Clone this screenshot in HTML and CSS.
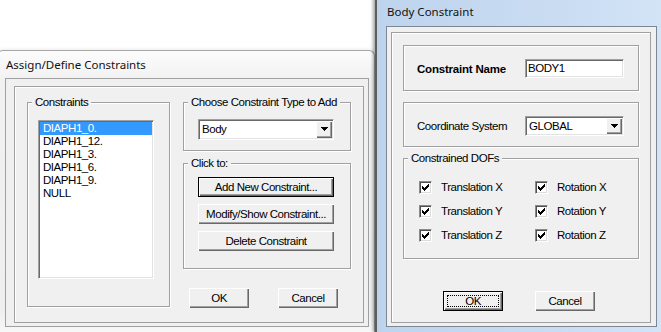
FILE: index.html
```html
<!DOCTYPE html>
<html>
<head>
<meta charset="utf-8">
<link rel="stylesheet" href="styles.css">
</head>
<body>
<div class="win win-left">
  <div class="title">Assign/Define Constraints</div>
  <div class="client">
    <div class="frame">
      <div class="group g-list">
        <span class="legend">Constraints</span>
        <div class="listbox">
          <div class="item sel">DIAPH1_0.</div>
          <div class="item">DIAPH1_12.</div>
          <div class="item">DIAPH1_3.</div>
          <div class="item">DIAPH1_6.</div>
          <div class="item">DIAPH1_9.</div>
          <div class="item">NULL</div>
        </div>
      </div>
      <div class="col">
        <div class="group g-type">
          <span class="legend">Choose Constraint Type to Add</span>
          <div class="combo combo-type">
            <span class="val">Body</span>
            <span class="drop"><svg width="7" height="4" viewBox="0 0 7 4" shape-rendering="crispEdges"><path d="M0 0h7v1h-7z M1 1h5v1h-5z M2 2h3v1h-3z M3 3h1v1h-1z" fill="#000"/></svg></span>
          </div>
        </div>
        <div class="group g-click">
          <span class="legend">Click to:</span>
          <button class="btn def">Add New Constraint...</button>
          <button class="btn">Modify/Show Constraint...</button>
          <button class="btn">Delete Constraint</button>
        </div>
        <div class="actions">
          <button class="btn">OK</button>
          <button class="btn">Cancel</button>
        </div>
      </div>
    </div>
  </div>
</div>

<div class="win win-right">
  <div class="title">Body Constraint</div>
  <div class="client">
    <div class="panel">
      <div class="box box-name">
        <span class="lbl bold">Constraint Name</span>
        <div class="textbox">BODY1</div>
      </div>
      <div class="box box-coord">
        <span class="lbl">Coordinate System</span>
        <div class="combo combo-coord">
          <span class="val">GLOBAL</span>
          <span class="drop"><svg width="7" height="4" viewBox="0 0 7 4" shape-rendering="crispEdges"><path d="M0 0h7v1h-7z M1 1h5v1h-5z M2 2h3v1h-3z M3 3h1v1h-1z" fill="#000"/></svg></span>
        </div>
      </div>
      <div class="group g-dofs">
        <span class="legend">Constrained DOFs</span>
        <div class="chk"><span class="cb"><svg width="11" height="11" viewBox="1 1 11 11" shape-rendering="crispEdges"><path d="M9 3h1v1h-1z M8 4h2v1h-2z M3 5h1v1h-1z M7 5h3v1h-3z M3 6h2v1h-2z M6 6h3v1h-3z M3 7h5v1h-5z M4 8h3v1h-3z M5 9h1v1h-1z" fill="#000"/></svg></span><span>Translation X</span></div>
        <div class="chk"><span class="cb"><svg width="11" height="11" viewBox="1 1 11 11" shape-rendering="crispEdges"><path d="M9 3h1v1h-1z M8 4h2v1h-2z M3 5h1v1h-1z M7 5h3v1h-3z M3 6h2v1h-2z M6 6h3v1h-3z M3 7h5v1h-5z M4 8h3v1h-3z M5 9h1v1h-1z" fill="#000"/></svg></span><span>Rotation X</span></div>
        <div class="chk"><span class="cb"><svg width="11" height="11" viewBox="1 1 11 11" shape-rendering="crispEdges"><path d="M9 3h1v1h-1z M8 4h2v1h-2z M3 5h1v1h-1z M7 5h3v1h-3z M3 6h2v1h-2z M6 6h3v1h-3z M3 7h5v1h-5z M4 8h3v1h-3z M5 9h1v1h-1z" fill="#000"/></svg></span><span>Translation Y</span></div>
        <div class="chk"><span class="cb"><svg width="11" height="11" viewBox="1 1 11 11" shape-rendering="crispEdges"><path d="M9 3h1v1h-1z M8 4h2v1h-2z M3 5h1v1h-1z M7 5h3v1h-3z M3 6h2v1h-2z M6 6h3v1h-3z M3 7h5v1h-5z M4 8h3v1h-3z M5 9h1v1h-1z" fill="#000"/></svg></span><span>Rotation Y</span></div>
        <div class="chk"><span class="cb"><svg width="11" height="11" viewBox="1 1 11 11" shape-rendering="crispEdges"><path d="M9 3h1v1h-1z M8 4h2v1h-2z M3 5h1v1h-1z M7 5h3v1h-3z M3 6h2v1h-2z M6 6h3v1h-3z M3 7h5v1h-5z M4 8h3v1h-3z M5 9h1v1h-1z" fill="#000"/></svg></span><span>Translation Z</span></div>
        <div class="chk"><span class="cb"><svg width="11" height="11" viewBox="1 1 11 11" shape-rendering="crispEdges"><path d="M9 3h1v1h-1z M8 4h2v1h-2z M3 5h1v1h-1z M7 5h3v1h-3z M3 6h2v1h-2z M6 6h3v1h-3z M3 7h5v1h-5z M4 8h3v1h-3z M5 9h1v1h-1z" fill="#000"/></svg></span><span>Rotation Z</span></div>
      </div>
      <div class="dlg-actions">
        <button class="btn def"><span class="focus">OK</span></button>
        <button class="btn">Cancel</button>
      </div>
    </div>
  </div>
</div>
</body>
</html>
```
FILE: styles.css
```css
* { box-sizing: border-box; }
html, body { margin: 0; padding: 0; }
body {
  width: 661px;
  height: 332px;
  overflow: hidden;
  position: relative;
  background: #fff;
  font-family: "Liberation Sans", Arial, sans-serif;
  font-size: 11.5px;
  letter-spacing: -0.45px;
  color: #000;
}

.win { position: absolute; }

.title {
  font-family: "Noto Sans", "Open Sans", sans-serif;
  font-size: 11.5px;
  letter-spacing: 0;
  white-space: nowrap;
  padding-left: 1px;
  color: #111;
}

/* ---------- left window ---------- */
.win-left {
  left: -3px;
  top: 50px;
  width: 378px;
  height: 282px;
  border: 1px solid #a6a6a6;
  border-bottom: none;
  border-radius: 6px 6px 0 0;
  background: linear-gradient(#fcfcfc, #f1f1f1 30px, #efefef 260px, #f7f7f7);
  padding: 0 5px 0 7px;
  box-shadow: 0 0 4px rgba(0, 0, 0, 0.12);
}
.win-left .title { height: 27px; line-height: 27px; }
.win-left .client {
  width: 364px;
  height: 249px;
  border: 1px solid #a0a0a0;
  background: #f0f0f0;
  padding: 7px 0 0 8px;
}
.frame {
  width: 350px;
  height: 237px;
  border: 1px solid #a0a0a0;
  box-shadow: inset 1px 1px #fff;
  display: flex;
  gap: 13px;
  padding: 15px 0 0 12px;
}

.group {
  position: relative;
  border: 1px solid #a0a0a0;
  box-shadow: inset 1px 1px #fff, 1px 1px #fff;
}
.legend {
  position: absolute;
  top: -7px;
  left: 4px;
  padding: 0 3px;
  line-height: 13px;
  background: #f0f0f0;
  white-space: nowrap;
}

.g-list { width: 143px; height: 205px; padding: 17px 0 0 10px; }

.listbox, .combo, .textbox {
  background: #fff;
  border: 1px solid;
  border-color: #a0a0a0 #fff #fff #a0a0a0;
  box-shadow: inset 1px 1px #696969, inset -1px -1px #e3e3e3;
}
.listbox { width: 116px; height: 159px; padding: 1px; }
.item { height: 13px; line-height: 13px; padding-left: 3px; white-space: nowrap; }
.item.sel { background: #3399ff; color: #fff; }

.col { width: 168px; display: flex; flex-direction: column; }
.g-type { height: 49px; padding: 16px 0 0 14px; }
.combo { display: flex; padding: 1px; }
.combo-type { width: 136px; height: 21px; }
.combo .val { flex: 1; padding-left: 2px; line-height: 17px; white-space: nowrap; }
.drop {
  width: 16px;
  background: #f0f0f0;
  box-shadow: inset 1px 1px #fff, inset -1px -1px #696969, inset -2px -2px #a0a0a0;
  display: flex;
  align-items: center;
  justify-content: center;
  padding-bottom: 1px;
}
.drop svg { display: block; }

.g-click {
  margin-top: 12px;
  height: 106px;
  padding: 13px 0 0 14px;
  display: flex;
  flex-direction: column;
  gap: 7px;
}

button { font: inherit; letter-spacing: inherit; color: #000; }
.btn {
  width: 136px;
  height: 20px;
  padding: 0;
  border: none;
  background: #f0f0f0;
  box-shadow: inset 1px 1px #fff, inset -1px -1px #696969, inset -2px -2px #a0a0a0;
  display: flex;
  align-items: center;
  justify-content: center;
  white-space: nowrap;
}
.btn.def { border: 1px solid #000; }

.actions { display: flex; gap: 29px; margin-top: 19px; padding-left: 6px; }
.actions .btn { width: 60px; }

/* ---------- right window ---------- */
.win-right {
  left: 375px;
  top: -4px;
  width: 300px;
  height: 336px;
  border: 1px solid #5e5e5e;
  border-left-width: 2px;
  border-bottom: none;
  background: linear-gradient(90deg, #bed4ed, #c9dcf2 60%, #d4e5f7);
  padding: 0 8px 0 9px;
  box-shadow: -2px 0 3px rgba(0, 0, 0, 0.35);
}
.win-right .title { height: 29px; line-height: 29px; }
.win-right .client {
  width: 271px;
  height: 301px;
  border: 1px solid #7d8794;
  background: #f0f0f0;
  padding: 5px 0 0 4px;
}
.panel {
  width: 260px;
  height: 291px;
  border: 1px solid #a0a0a0;
  box-shadow: inset 1px 1px #fff;
  padding: 12px 0 0 11px;
  display: flex;
  flex-direction: column;
}
.box {
  width: 236px;
  border: 1px solid #a0a0a0;
  box-shadow: inset 1px 1px #fff, 1px 1px #fff;
  display: flex;
  align-items: center;
  padding-left: 13px;
}
.box-name { height: 46px; padding-top: 1px; }
.box-coord { height: 45px; margin-top: 11px; padding-top: 3px; }
.lbl { width: 108px; white-space: nowrap; }
.bold { font-weight: bold; letter-spacing: -0.2px; }
.textbox { width: 99px; height: 19px; padding-left: 2px; line-height: 17px; }
.combo-coord { width: 99px; height: 20px; }
.combo-coord .val { line-height: 16px; }

.g-dofs {
  margin-top: 11px;
  width: 236px;
  height: 101px;
  padding: 22px 0 0 15px;
  display: grid;
  grid-template-columns: 116px 116px;
  grid-auto-rows: 24px;
  align-content: start;
}
.chk { display: flex; align-items: flex-start; gap: 9px; line-height: 13px; white-space: nowrap; }
.cb {
  width: 13px;
  height: 13px;
  flex: none;
  background: #fff;
  border: 1px solid;
  border-color: #8a8a8a #fff #fff #8a8a8a;
  box-shadow: inset 1px 1px #505050, inset -1px -1px #dcdcdc;
}
.cb svg { display: block; }

.dlg-actions { display: flex; gap: 32px; margin-top: 32px; padding-left: 40px; }
.dlg-actions .btn { width: 60px; }
.focus {
  align-self: stretch;
  flex: 1;
  margin: 3px;
  border: 1px dotted #000;
  display: flex;
  align-items: center;
  justify-content: center;
}
```
